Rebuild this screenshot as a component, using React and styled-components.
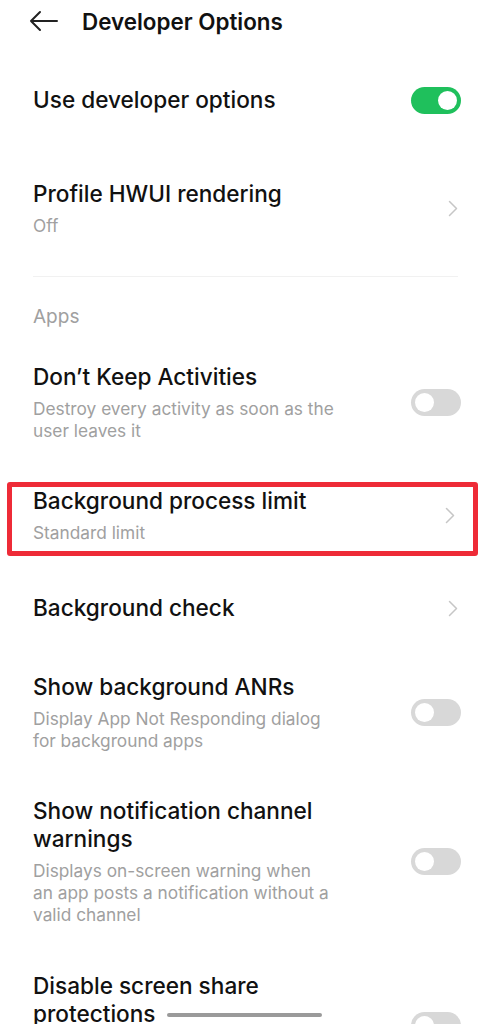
import React from 'react';
import styled, { createGlobalStyle } from 'styled-components';

const GlobalStyle = createGlobalStyle`
    body {
        margin: 0;
        background: #fff;
        font-family: Inter, Roboto, "Noto Sans", "Liberation Sans", sans-serif;
        -webkit-font-smoothing: antialiased;
    }
`;

const Page = styled.div`
    width: 490px;
    height: 1024px;
    overflow: hidden;
    position: relative;
    background: #fff;
`;

const Header = styled.div`
    height: 42px;
    display: flex;
    align-items: center;
    padding-left: 29px;
    gap: 23px;
`;

const HeaderTitle = styled.div`
    font-size: 22.4px;
    font-weight: 600;
    color: #111;
`;

const Row = styled.div`
    display: flex;
    align-items: center;
    justify-content: space-between;
    padding: ${(p) => p.$pt || 0}px 29px ${(p) => p.$pb || 0}px 33px;
`;

const BoxedRow = styled.div`
    display: flex;
    align-items: center;
    justify-content: space-between;
    margin: 0 12px ${(p) => p.$mb || 0}px 7px;
    padding: 0 15px 7px 21px;
    border: 5px solid #ee2b37;
    border-radius: 3px;
`;

const TextCol = styled.div`
    display: flex;
    flex-direction: column;
    gap: 7px;
    max-width: 360px;
`;

const Title = styled.div`
    font-size: 22.6px;
    line-height: 28px;
    font-weight: 500;
    color: #111;
    white-space: pre-line;
`;

const Sub = styled.div`
    font-size: 17.3px;
    line-height: 22px;
    color: #a0a0a0;
    white-space: pre-line;
`;

const Section = styled.div`
    padding: 29px 33px 35px;
    font-size: 19px;
    line-height: 22px;
    color: #a0a0a0;
`;

const Divider = styled.div`
    height: 1px;
    margin: 0 32px 0 33px;
    background: #f1f1f1;
`;

const Toggle = styled.div`
    flex: none;
    width: 50px;
    height: 27px;
    border-radius: 14px;
    background: ${(p) => (p.$on ? '#1fc05c' : '#d8d8d8')};
    display: flex;
    align-items: center;
    justify-content: ${(p) => (p.$on ? 'flex-end' : 'flex-start')};
    padding: 0 4px;
    box-sizing: border-box;
`;

const Knob = styled.div`
    width: 19px;
    height: 19px;
    border-radius: 50%;
    background: #fff;
`;

const ChevronWrap = styled.div`
    flex: none;
    margin-right: 3px;
    display: flex;
`;

const GestureBar = styled.div`
    position: absolute;
    left: 167px;
    top: 1013px;
    width: 155px;
    height: 4px;
    border-radius: 2px;
    background: #9a9a9a;
`;

const BackArrow = () => (
    <svg width="30" height="24" viewBox="0 0 30 24" fill="none" stroke="#222" strokeWidth="2" strokeLinecap="round" strokeLinejoin="round">
        <path d="M28 12H2M11 3L2 12l9 9" />
    </svg>
);

const Chevron = () => (
    <ChevronWrap>
        <svg width="10" height="17" viewBox="0 0 10 17" fill="none" stroke="#c6c6c6" strokeWidth="1.5" strokeLinecap="round" strokeLinejoin="round">
            <path d="M1.5 1.5l7 7-7 7" />
        </svg>
    </ChevronWrap>
);

const Switch = ({ on }) => (
    <Toggle $on={on}>
        <Knob />
    </Toggle>
);

const Text = ({ title, sub }) => (
    <TextCol>
        <Title>{title}</Title>
        {sub && <Sub>{sub}</Sub>}
    </TextCol>
);

export default function App() {
    return (
        <Page>
            <GlobalStyle />
            <Header>
                <BackArrow />
                <HeaderTitle>Developer Options</HeaderTitle>
            </Header>

            <Row $pt={44} $pb={33}>
                <Text title="Use developer options" />
                <Switch on />
            </Row>

            <Row $pt={33} $pb={39}>
                <Text title="Profile HWUI rendering" sub="Off" />
                <Chevron />
            </Row>

            <Divider />
            <Section>Apps</Section>

            <Row $pb={40}>
                <Text title="Don’t Keep Activities" sub={'Destroy every activity as soon as the\nuser leaves it'} />
                <Switch />
            </Row>

            <BoxedRow $mb={38}>
                <Text title="Background process limit" sub="Standard limit" />
                <Chevron />
            </BoxedRow>

            <Row $pb={51}>
                <Text title="Background check" />
                <Chevron />
            </Row>

            <Row $pb={45}>
                <Text title="Show background ANRs" sub={'Display App Not Responding dialog\nfor background apps'} />
                <Switch />
            </Row>

            <Row $pb={46}>
                <Text
                    title={'Show notification channel\nwarnings'}
                    sub={'Displays on-screen warning when\nan app posts a notification without a\nvalid channel'}
                />
                <Switch />
            </Row>

            <Row>
                <Text title={'Disable screen share\nprotections'} sub={'Disable system applied app and\ncontent protections'} />
                <Switch />
            </Row>

            <GestureBar />
        </Page>
    );
}
